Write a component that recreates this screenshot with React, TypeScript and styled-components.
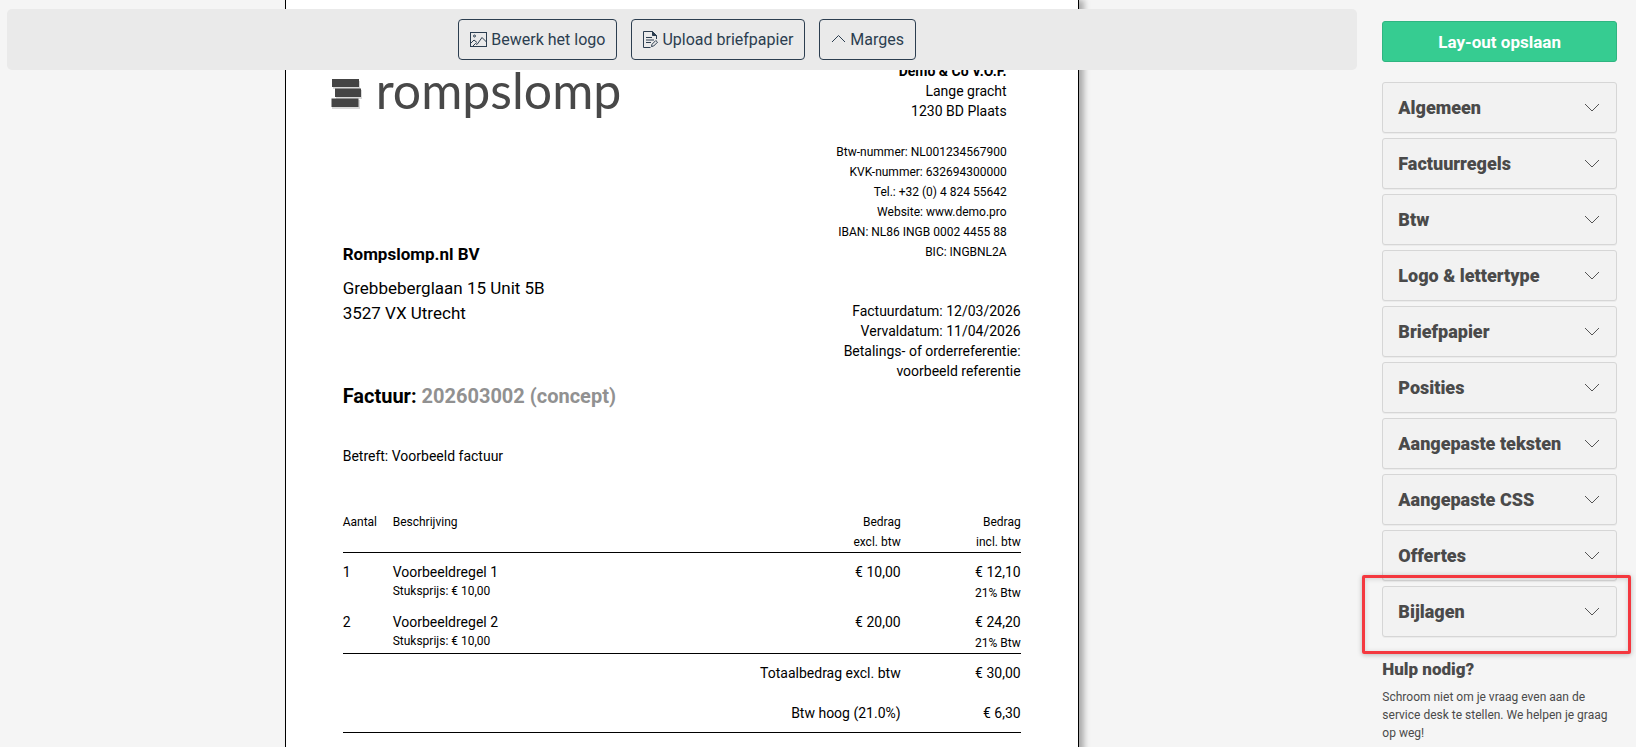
import React from "react";
import styled, { createGlobalStyle, css } from "styled-components";

const GlobalStyle = createGlobalStyle`
  *, *::before, *::after { box-sizing: border-box; }
  body {
    margin: 0;
    background: #f5f5f5;
    color: #4a4a4a;
    font-family: Roboto, "Liberation Sans", sans-serif;
    font-size: 16px;
  }
  h1, h2, p, address { margin: 0; font-style: normal; }
  button { font-family: inherit; cursor: pointer; }
`;

const Page = styled.div`
  display: grid;
  grid-template-columns: 5fr 1fr;
  height: 100vh;
  overflow: hidden;
`;

const Preview = styled.main`
  position: relative;
  min-width: 0;
  overflow: hidden;
`;

const Toolbar = styled.div`
  position: absolute;
  top: 9px;
  left: 7px;
  right: 6px;
  display: flex;
  justify-content: center;
  gap: 14px;
  padding: 10px 10px 10px 20px;
  border-radius: 5px;
  background: #eaeaea;
`;

const ToolButton = styled.button`
  display: flex;
  align-items: center;
  gap: 4px;
  height: 41px;
  padding: 0 11px;
  border: 1px solid #2c3e50;
  border-radius: 4px;
  background: transparent;
  color: #2c3e50;
  font-size: 16px;
`;

const Paper = styled.article`
  width: 794px;
  min-height: 1123px;
  margin: 0 auto;
  padding: 61px 57px 0;
  border: solid #000;
  border-width: 0 1px;
  background: #fff;
  box-shadow: 5px 0 6px rgba(0, 0, 0, 0.3);
  color: #000;
  font-size: 14px;
  line-height: 20px;
`;

const Letterhead = styled.header`
  display: flex;
  justify-content: space-between;
  align-items: flex-start;
  height: 181px;
  padding-right: 14px;
`;

const Logo = styled.div`
  display: flex;
  align-items: flex-end;
  gap: 12px;
  margin-left: -13px;
  color: #484848;
  font-family: Lato, sans-serif;
  font-size: 50px;
  line-height: 58px;
`;

const Sender = styled.address`
  text-align: right;
`;

const SenderDetails = styled.div`
  margin-top: 21px;
  font-size: 12px;
`;

const Addressing = styled.section`
  display: flex;
  justify-content: space-between;
  height: 140px;
`;

const Recipient = styled.address`
  font-size: 17px;
  line-height: 25px;
`;

const RecipientName = styled.strong`
  display: block;
  margin-bottom: 9px;
`;

const Dates = styled.div`
  padding-top: 59px;
  text-align: right;
`;

const InvoiceTitle = styled.h1`
  font-size: 20px;
  line-height: 28px;
`;

const Concept = styled.span`
  color: #919191;
`;

const Subject = styled.p`
  margin: 36px 0 46px;
`;

const Lines = styled.table`
  width: 100%;
  border-collapse: separate;
  border-spacing: 0;
  table-layout: fixed;
`;

const Cell = styled.td<{ $right?: boolean }>`
  padding: 9px 0 0;
  vertical-align: top;
  text-align: ${(p) => (p.$right ? "right" : "left")};
`;

const HeadCell = styled.th<{ $right?: boolean }>`
  padding: 0;
  border-bottom: 1px solid #000;
  font-size: 12px;
  font-weight: 400;
  vertical-align: top;
  text-align: ${(p) => (p.$right ? "right" : "left")};
`;

const UnitPrice = styled.div`
  font-size: 12px;
  line-height: 18px;
`;

const VatRate = styled.div`
  margin-top: 1px;
  font-size: 12px;
`;

const ruled = css`
  ${Cell} { border-bottom: 1px solid #000; }
`;

const Row = styled.tr<{ $ruled?: boolean }>`
  ${(p) => p.$ruled && ruled}
`;

const TotalCell = styled(Cell)<{ $last?: boolean }>`
  padding: ${(p) => (p.$last ? "20px 0 9px" : "9px 0 0")};
`;

const Sidebar = styled.aside`
  min-width: 0;
  padding: 21px 19px 0;
`;

const SaveButton = styled.button`
  display: block;
  width: 100%;
  height: 41px;
  margin-bottom: 20px;
  border: 1px solid #2fb581;
  border-radius: 3px;
  background: #36cc91;
  color: #fff;
  font-size: 17px;
  font-weight: 700;
`;

const Accordion = styled.div`
  display: grid;
  gap: 5px;
`;

const Panel = styled.section`
  position: relative;
`;

const PanelButton = styled.button`
  display: flex;
  align-items: center;
  justify-content: space-between;
  width: 100%;
  height: 51px;
  padding: 0 16px 0 15px;
  border: 1px solid #d6d6d6;
  border-radius: 3px;
  background: #f2f2f2;
  box-shadow: 0 1px 0 rgba(0, 0, 0, 0.04);
  color: #4a4a4a;
  font-size: 18px;
  font-weight: 900;
  white-space: nowrap;
`;

const Highlight = styled.div`
  position: absolute;
  inset: -11px -14px -17px -20px;
  border: 3px solid #f4383f;
  border-radius: 2px;
  box-shadow: 0 1px 5px rgba(0, 0, 0, 0.25), inset 0 1px 5px rgba(0, 0, 0, 0.15);
  pointer-events: none;
`;

const Help = styled.section`
  margin-top: 21px;
  font-size: 12px;
  line-height: 18px;
`;

const HelpTitle = styled.h2`
  margin-bottom: 8px;
  font-size: 17px;
  font-weight: 900;
  line-height: 22px;
`;

const ImageIcon = () => (
  <svg width="17" height="15" viewBox="0 0 17 15" fill="none" stroke="currentColor" aria-hidden="true">
    <rect x="0.5" y="0.5" width="16" height="14" />
    <circle cx="4.5" cy="4" r="1" />
    <path d="M1 11 4 8 7 10.500M3 14 5.500 11.500 7 12.500 12 5.500 16.500 10" />
  </svg>
);

const FileIcon = () => (
  <svg width="15" height="17" viewBox="0 0 15 17" fill="none" stroke="currentColor" aria-hidden="true">
    <path d="M7.500 16.500H.5V.5H9.500L13.500 4.500V8" />
    <path d="M9.500.5V4.500H13.500Z" fill="currentColor" />
    <path d="M3 6.500h6M3 9h8M3 11.500h5M8.500 15.500 9 13.300 12.800 9.500l1.700 1.700-3.800 3.800Z" />
  </svg>
);

const ChevronUp = () => (
  <svg width="15" height="15" viewBox="0 0 15 15" fill="none" stroke="currentColor" aria-hidden="true">
    <path d="M1 10 7.500 3.500 14 10" />
  </svg>
);

const ChevronDown = () => (
  <svg width="16" height="9" viewBox="0 0 16 9" fill="none" stroke="#555" aria-hidden="true">
    <path d="M1 1 8 8 15 1" />
  </svg>
);

const LogoMark = () => (
  <svg width="34" height="41" viewBox="0 0 34 41" aria-hidden="true">
    <g fill="#000" opacity="0.15">
      <path d="M3 3h27v8H3zM6 12h26v9H6zM2 22h28v9H2z" />
    </g>
    <g fill="#444">
      <path d="M2 1h27v8H2zM5 10.500h26v8.500H5zM1.500 20.500h27v8.500h-27z" />
    </g>
  </svg>
);

const details = [
  "Btw-nummer: NL001234567900",
  "KVK-nummer: 632694300000",
  "Tel.: +32 (0) 4 824 55642",
  "Website: www.demo.pro",
  "IBAN: NL86 INGB 0002 4455 88",
  "BIC: INGBNL2A",
];

const dates = [
  "Factuurdatum: 12/03/2026",
  "Vervaldatum: 11/04/2026",
  "Betalings- of orderreferentie:",
  "voorbeeld referentie",
];

const products = [
  { count: 1, name: "Voorbeeldregel 1", excl: "€ 10,00", incl: "€ 12,10" },
  { count: 2, name: "Voorbeeldregel 2", excl: "€ 20,00", incl: "€ 24,20" },
];

const panels = [
  "Algemeen",
  "Factuurregels",
  "Btw",
  "Logo & lettertype",
  "Briefpapier",
  "Posities",
  "Aangepaste teksten",
  "Aangepaste CSS",
  "Offertes",
  "Bijlagen",
];

export default function App() {
  return (
    <>
      <GlobalStyle />
      <Page>
        <Preview>
          <Paper>
            <Letterhead>
              <Logo>
                <LogoMark />
                <span>rompslomp</span>
              </Logo>
              <Sender>
                <strong>Demo &amp; Co V.O.F.</strong>
                <div>Lange gracht</div>
                <div>1230 BD Plaats</div>
                <SenderDetails>
                  {details.map((line) => (
                    <div key={line}>{line}</div>
                  ))}
                </SenderDetails>
              </Sender>
            </Letterhead>
            <Addressing>
              <Recipient>
                <RecipientName>Rompslomp.nl BV</RecipientName>
                <div>Grebbeberglaan 15 Unit 5B</div>
                <div>3527 VX Utrecht</div>
              </Recipient>
              <Dates>
                {dates.map((line) => (
                  <div key={line}>{line}</div>
                ))}
              </Dates>
            </Addressing>
            <InvoiceTitle>
              Factuur: <Concept>202603002 (concept)</Concept>
            </InvoiceTitle>
            <Subject>Betreft: Voorbeeld factuur</Subject>
            <Lines>
              <colgroup>
                <col width="50" />
                <col />
                <col width="150" />
                <col width="120" />
              </colgroup>
              <thead>
                <tr>
                  <HeadCell scope="col">Aantal</HeadCell>
                  <HeadCell scope="col">Beschrijving</HeadCell>
                  <HeadCell scope="col" $right>Bedrag<br />excl. btw</HeadCell>
                  <HeadCell scope="col" $right>Bedrag<br />incl. btw</HeadCell>
                </tr>
              </thead>
              <tbody>
                {products.map((item, i) => (
                  <Row key={item.name} $ruled={i === products.length - 1}>
                    <Cell>{item.count}</Cell>
                    <Cell>
                      {item.name}
                      <UnitPrice>Stuksprijs: € 10,00</UnitPrice>
                    </Cell>
                    <Cell $right>{item.excl}</Cell>
                    <Cell $right>
                      {item.incl}
                      <VatRate>21% Btw</VatRate>
                    </Cell>
                  </Row>
                ))}
              </tbody>
              <tfoot>
                <Row>
                  <TotalCell colSpan={3} $right>Totaalbedrag excl. btw</TotalCell>
                  <TotalCell $right>€ 30,00</TotalCell>
                </Row>
                <Row $ruled>
                  <TotalCell colSpan={3} $right $last>Btw hoog (21.0%)</TotalCell>
                  <TotalCell $right $last>€ 6,30</TotalCell>
                </Row>
              </tfoot>
            </Lines>
          </Paper>
          <Toolbar>
            <ToolButton type="button"><ImageIcon />Bewerk het logo</ToolButton>
            <ToolButton type="button"><FileIcon />Upload briefpapier</ToolButton>
            <ToolButton type="button"><ChevronUp />Marges</ToolButton>
          </Toolbar>
        </Preview>
        <Sidebar>
          <SaveButton type="button">Lay-out opslaan</SaveButton>
          <Accordion>
            {panels.map((title) => (
              <Panel key={title}>
                <PanelButton type="button" aria-expanded={false}>
                  {title}
                  <ChevronDown />
                </PanelButton>
                {title === "Bijlagen" && <Highlight />}
              </Panel>
            ))}
          </Accordion>
          <Help>
            <HelpTitle>Hulp nodig?</HelpTitle>
            <p>Schroom niet om je vraag even aan de service desk te stellen. We helpen je graag op weg!</p>
          </Help>
        </Sidebar>
      </Page>
    </>
  );
}
